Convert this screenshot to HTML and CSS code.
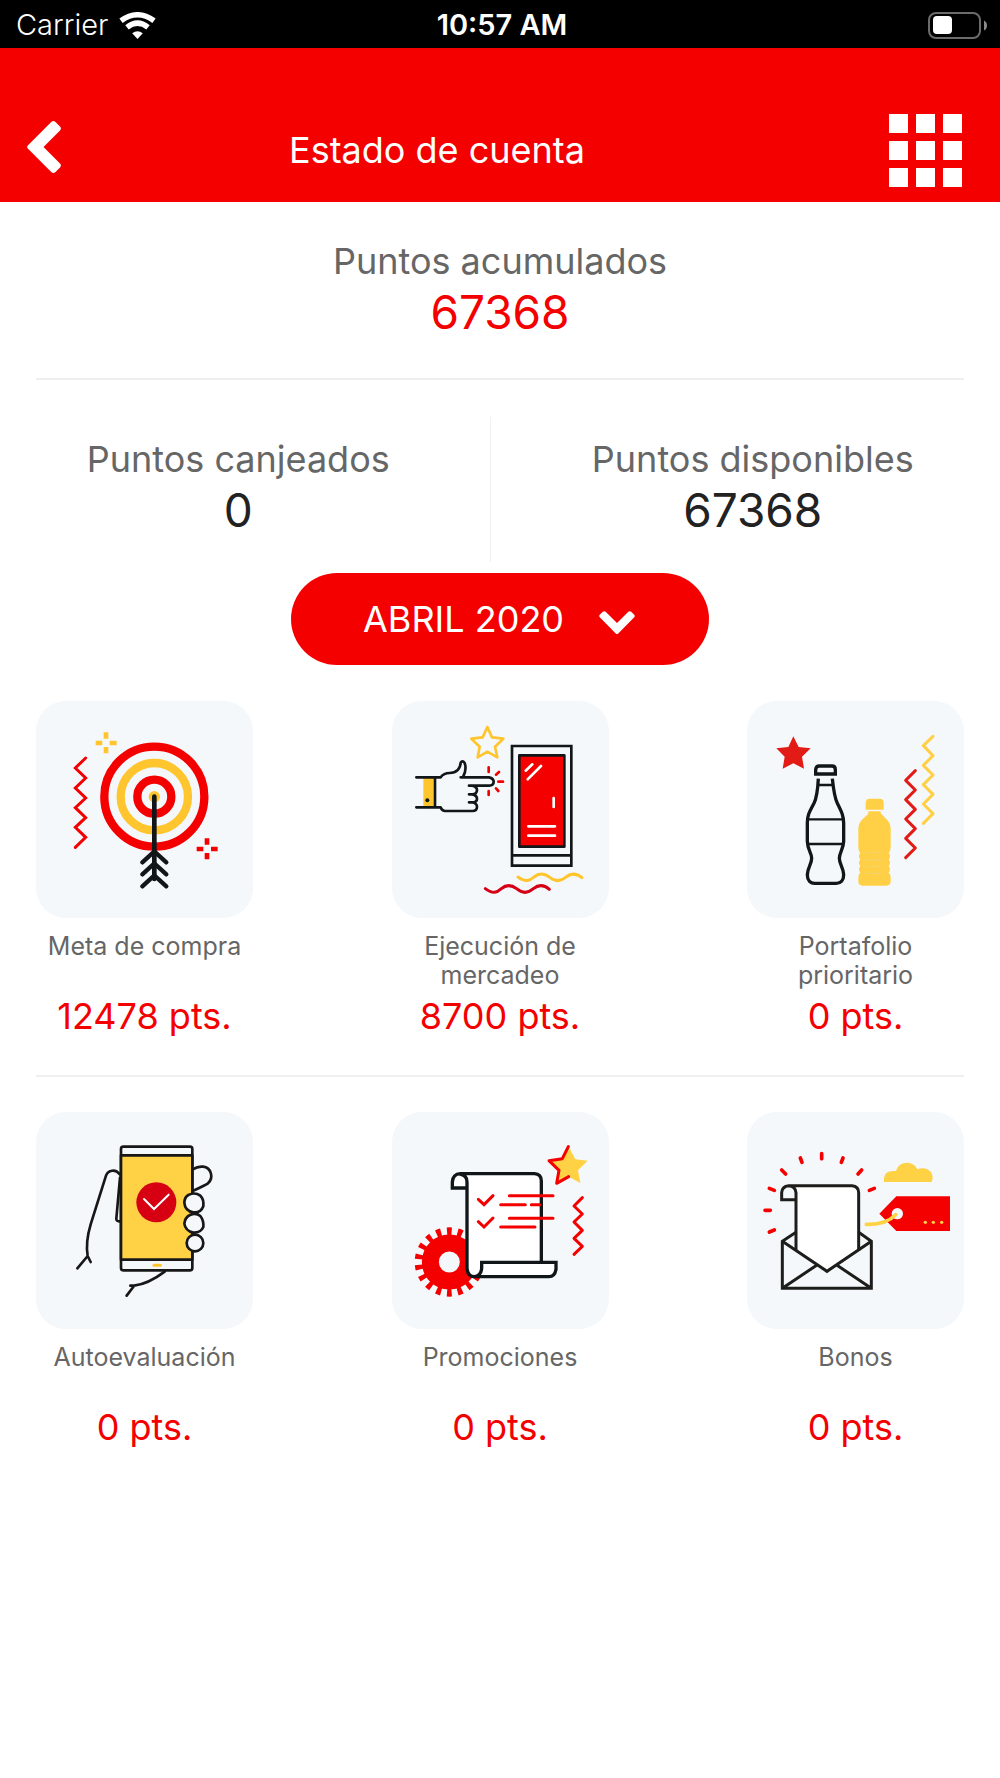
FILE: index.html
```html
<!DOCTYPE html>
<html lang="es">
<head>
<meta charset="utf-8">
<meta name="viewport" content="width=device-width, initial-scale=1">
<title>Estado de cuenta</title>
<link rel="stylesheet" href="styles.css">
</head>
<body>
<div class="status">
  <div class="status-left">
    <span>Carrier</span>
    <svg class="wifi" viewBox="0 0 37 27" aria-hidden="true">
      <path d="M18.500 27 L13.200 21.200 Q18.500 17.200 23.800 21.200Z" fill="#fff"/>
      <path d="M8 15.300 Q18.500 7 29 15.300" fill="none" stroke="#fff" stroke-width="5.500"/>
      <path d="M2 8.800 Q18.500 -3.200 35 8.800" fill="none" stroke="#fff" stroke-width="5.500"/>
    </svg>
  </div>
  <span class="status-time">10:57 AM</span>
  <div class="status-right">
    <svg class="battery" viewBox="0 0 60 27" aria-hidden="true">
      <rect x="1" y="1" width="51" height="25" rx="7" fill="none" stroke="#6b6b6b" stroke-width="2"/>
      <rect x="5" y="4" width="19" height="18" rx="4" fill="#fff"/>
      <path d="M56 8.500 Q59 10 59 13.500 Q59 17 56 18.500Z" fill="#8a8a8a"/>
    </svg>
  </div>
</div>

<header class="header">
  <button class="back" type="button" aria-label="Volver">
    <svg viewBox="0 0 34 52" aria-hidden="true"><path d="M24.500 .8 Q26.500 -.8 28.500 1 L33 5.500 Q34.800 7.600 33 9.500 L16.500 26 L33 42.500 Q34.800 44.400 33 46.500 L28.500 51 Q26.500 52.800 24.500 51.200 L.8 27.500 Q-.5 26 .8 24.500Z" fill="#fff"/></svg>
  </button>
  <h1 class="title">Estado de cuenta</h1>
  <button class="menu" type="button" aria-label="Menú">
    <svg viewBox="0 0 73 73" aria-hidden="true"><path d="M0 0h19v19H0zM27 0h19v19H27zM54 0h19v19H54zM0 27h19v19H0zM27 27h19v19H27zM54 27h19v19H54zM0 54h19v19H0zM27 54h19v19H27zM54 54h19v19H54z" fill="#fff"/></svg>
  </button>
</header>

<main class="main">
  <section class="total">
    <h2 class="stat-label">Puntos acumulados</h2>
    <p class="stat-value red">67368</p>
  </section>

  <section class="split">
    <div class="stat">
      <h2 class="stat-label">Puntos canjeados</h2>
      <p class="stat-value">0</p>
    </div>
    <div class="rule"></div>
    <div class="stat">
      <h2 class="stat-label">Puntos disponibles</h2>
      <p class="stat-value">67368</p>
    </div>
  </section>

  <div class="month">
    <select class="month-select" aria-label="Mes">
      <option>ABRIL 2020</option>
    </select>
    <svg class="month-arrow" viewBox="0 0 36 24" aria-hidden="true"><path d="M1 6.500 Q-.5 5 1 3.500 L3.800 .8 Q5.200 -.4 6.700 .8 L18 12 L29.300 .8 Q30.800 -.4 32.200 .8 L35 3.500 Q36.500 5 35 6.500 L19 22.800 Q18 23.600 17 22.800Z" fill="#fff"/></svg>
  </div>

  <section class="grid">
    <article class="card">
      <svg class="tile" viewBox="19 19 651 651" aria-hidden="true">
        <g fill="none">
          <circle cx="374" cy="306" r="150" stroke="#f40000" stroke-width="25"/>
          <circle cx="374" cy="306" r="101" stroke="#ffc52e" stroke-width="25"/>
          <circle cx="374" cy="306" r="51" stroke="#f40000" stroke-width="25"/>
          <circle cx="374" cy="306" r="17" fill="#ffc52e"/>
          <path d="M168 190 L137 220 L168 250 L137 280 L168 310 L137 339 L168 369 L137 398 L168 428 L137 458" stroke="#f40000" stroke-width="9" stroke-linecap="round"/>
          <path d="M374 306V553" stroke="#111719" stroke-width="14" stroke-linecap="round"/>
          <path d="M338 503L374 470L410 503M338 539L374 506L410 539M338 575L374 542L410 575" stroke="#111719" stroke-width="13" stroke-linecap="round"/>
          <path d="M229 113V132M229 157V176M198 145H218M240 145H261" stroke="#ffc52e" stroke-width="14"/>
          <path d="M532 431V450M532 475V494M501 463H521M544 463H564" stroke="#f40000" stroke-width="14"/>
        </g>
      </svg>
      <h3 class="name">Meta de compra</h3>
      <p class="points">12478 pts.</p>
    </article>

    <article class="card">
      <svg class="tile" viewBox="19 19 651 651" aria-hidden="true">
        <g fill="none" stroke-linecap="round" stroke-linejoin="round">
          <path d="M305 97L319 128L353 132L328 156L335 188L305 171L276 188L282 156L257 132L291 128Z" stroke="#ffc52e" stroke-width="8"/>
          <path d="M113 250H144V337H113Z" fill="#ffc52e"/>
          <circle cx="125" cy="317" r="6" fill="#111719"/>
          <g stroke="#111719" stroke-width="8">
            <path d="M92 248H165Q174 235 192 235C213 235 224 222 225 204Q230 196 237 205Q244 225 232 247M148 248V338M225 248H310Q324 251 324 261Q324 272 310 273H250M260 273Q274 276 274 286Q274 298 260 299H250M260 299Q274 302 274 312Q274 323 260 323H250M260 323Q274 327 274 336Q274 349 260 349H177Q168 347 165 338H92"/>
            <path d="M379 154H557V513H379ZM379 482H557" stroke-linejoin="miter"/>
            <path d="M401 182H536V456H401Z" fill="#f40000"/>
          </g>
          <path d="M309 218V232M340 232L331 240M338 261H352M331 281L338 289M309 289V301" stroke="#f40000" stroke-width="8"/>
          <path d="M420 228L440 209M426 254L466 214M504 310V337M428 395H508M428 423H508" stroke="#fff" stroke-width="8"/>
          <path d="M397 547C420 564 433 558 445 547C459 535 475 535 491 547C508 562 524 562 541 547C556 535 573 536 589 549" stroke="#ffc52e" stroke-width="9"/>
          <path d="M299 582C322 599 334 594 347 582C361 570 377 570 393 582C410 597 426 597 443 582C458 570 475 570 491 584" stroke="#d60016" stroke-width="9"/>
        </g>
      </svg>
      <h3 class="name">Ejecución de mercadeo</h3>
      <p class="points">8700 pts.</p>
    </article>

    <article class="card">
      <svg class="tile" viewBox="19 19 651 651" aria-hidden="true">
        <path d="M158 125L174 157L210 161L184 186L190 222L158 206L126 222L132 186L107 161L143 157Z" fill="#e31b17"/>
        <g fill="none" stroke="#111719">
          <path d="M225 238V225Q226 214 236 214H274Q284 214 284 225V238Z" stroke-width="10"/>
          <path d="M233 252C231 290 229 308 220 326C205 354 200 362 200 385V440C201 468 213 474 213 491C213 508 201 518 200 540C200 558 210 566 222 566H287C300 566 309 557 309 540C308 518 296 508 296 491C297 472 308 464 309 440V385C308 362 304 354 290 326C281 308 279 290 275 252" stroke-width="10"/>
          <path d="M234 271H275M202 374H307M202 448H307" stroke-width="7"/>
        </g>
        <path d="M375 345V325Q375 312 387 312H417Q429 312 429 325V345ZM383 350H420V356L442 378Q450 388 450 400V458Q450 470 444 474Q452 485 444 494Q452 505 444 514Q452 525 444 534Q450 538 450 548V560Q450 573 437 573H366Q353 573 353 560V548Q353 538 359 534Q351 525 359 514Q351 505 359 494Q351 485 359 474Q353 470 353 458V400Q353 388 361 378L383 357Z" fill="#ffcf45"/>
        <path d="M375 474H425M375 496H425M375 515H425M375 536H425" stroke="#f8d266" stroke-width="4"/>
        <g fill="none" stroke-width="9" stroke-linecap="round" stroke-linejoin="round">
          <path d="M577 125L548 153L577 183L548 212L577 241L548 270L577 299L548 328L577 357L548 386" stroke="#ffcf45"/>
          <path d="M524 228L495 257L524 286L495 315L524 344L495 373L524 402L495 431L524 460L495 489" stroke="#e31b17"/>
        </g>
      </svg>
      <h3 class="name">Portafolio prioritario</h3>
      <p class="points">0 pts.</p>
    </article>

    <hr class="divider">

    <article class="card">
      <svg class="tile" viewBox="19 18 651 651" aria-hidden="true">
        <g fill="none" stroke="#171717" stroke-width="8" stroke-linecap="round" stroke-linejoin="round">
          <path d="M270 205C258 188 235 192 229 209L183 355Q167 408 174 450L183 468M174 450L143 487M271 215L260 338Q260 347 270 346"/>
          <path d="M405 497Q356 534 313 539L302 539M313 540L291 569"/>
          <path d="M489 190Q505 180 520 182C545 185 553 215 535 232Q526 238 489 255"/>
          <rect x="274" y="122" width="214" height="371" rx="7" fill="#f5f8fb"/>
          <path d="M274 148H488V461H274Z" fill="#ffd145"/>
          <path d="M476 267Q496 257 512 269Q523 279 521 301Q513 322 491 319Q466 316 464 290Q465 273 476 267ZM481 327Q499 319 512 330Q523 344 521 363Q513 381 491 380Q467 375 464 353Q466 334 481 327Z" fill="#f5f8fb"/>
          <circle cx="496" cy="411" r="25" fill="#f5f8fb"/>
        </g>
        <circle cx="380" cy="289" r="60" fill="#d60012"/>
        <path d="M343 279L373 309L417 266" fill="none" stroke="#fff" stroke-width="6" stroke-linecap="round"/>
        <path d="M373 478H392" stroke="#ffc52e" stroke-width="9" stroke-linecap="round"/>
      </svg>
      <h3 class="name">Autoevaluación</h3>
      <p class="points">0 pts.</p>
    </article>

    <article class="card">
      <svg class="tile" viewBox="19 18 651 651" aria-hidden="true">
        <circle cx="191" cy="468" r="57" fill="none" stroke="#f40000" stroke-width="51"/>
        <circle cx="191" cy="468" r="92" fill="none" stroke="#f40000" stroke-width="24" pathLength="180" stroke-dasharray="4.400 5.600" stroke-dashoffset="-2.800"/>
        <path d="M200 245V228Q202 204 224 203H448Q467 205 467 222V469H511V489Q508 512 490 512H264Q244 508 244 488V245Z" fill="#fff"/>
        <g fill="none" stroke="#111719" stroke-width="10">
          <path d="M244 246H200V228Q202 204 224 203H446Q467 204 467 225V469"/>
          <path d="M222 204Q244 207 244 228V486Q246 512 266 512Q287 509 288 486V469H511V489Q508 512 490 512H266"/>
        </g>
        <path d="M549 122L569 160L606 164L577 193L584 231L549 212L513 232L520 193L490 164L530 158Z" fill="#ffd145"/>
        <g fill="none" stroke="#f40000" stroke-width="9" stroke-linecap="round" stroke-linejoin="round">
          <path d="M548 122L530 158L490 164L520 193L513 232L549 212"/>
          <path d="M590 275L565 300L590 324L565 348L590 373L565 397L590 421L565 445"/>
          <path d="M278 280L295 296L322 269M278 347L295 363L322 336" stroke-linejoin="miter"/>
          <path d="M371 269H502M345 296H419M437 296H462M371 337H502M345 363H448"/>
        </g>
      </svg>
      <h3 class="name">Promociones</h3>
      <p class="points">0 pts.</p>
    </article>

    <article class="card">
      <svg class="tile" viewBox="19 18 651 651" aria-hidden="true">
        <path d="M166 239H334Q354 241 354 258V434L259 496L166 434Z" fill="#fff"/>
        <g fill="none" stroke="#1d1d1b" stroke-width="9">
          <path d="M166 434V260Q164 240 144 239Q124 241 123 260V281H166M142 239H334Q354 241 354 260V434"/>
          <path d="M166 379L125 406V547H392V406L354 379M125 406L259 496L392 406M125 547L229 477M392 547L288 477"/>
        </g>
        <path d="M243 143V158M179 156L184 169M307 156L302 169M123 192L135 204M363 192L352 204M86 247L101 253M401 247L386 253M73 313H89M86 378L101 372" stroke="#f40000" stroke-width="11" stroke-linecap="round"/>
        <path d="M430 228Q427 195 457 195H466C474 163 519 162 530 190C555 180 577 194 576 217L573 228Z" fill="#ffd145"/>
        <path d="M467 271H628V375H467L416 323Z" fill="#f40000"/>
        <circle cx="470" cy="323" r="17" fill="#f5f8fb"/>
        <path d="M377 355Q435 357 465 326" fill="none" stroke="#ffd145" stroke-width="11" stroke-linecap="round"/>
        <g fill="#ffd145"><circle cx="554" cy="349" r="5"/><circle cx="578" cy="349" r="5"/><circle cx="603" cy="349" r="5"/></g>
      </svg>
      <h3 class="name">Bonos</h3>
      <p class="points">0 pts.</p>
    </article>
  </section>
</main>
</body>
</html>
```
FILE: styles.css
```css
* { box-sizing: border-box; }

body {
  margin: 0;
  background: #fff;
  color: #222;
  font-family: Inter, "Liberation Sans", sans-serif;
}

h1, h2, h3, p { margin: 0; font-weight: 400; }

button {
  padding: 0;
  border: 0;
  background: none;
  cursor: pointer;
}

svg { display: block; }

/* Device status bar */
.status {
  display: grid;
  grid-template-columns: 1fr auto 1fr;
  align-items: center;
  height: 48px;
  padding: 2px 12px 0 16px;
  background: #000;
  color: #fff;
  font-size: 29px;
  line-height: 32px;
}

.status-left { display: flex; align-items: center; gap: 11px; font-weight: 300; }
.status-time { font-weight: 600; }
.status-right { display: flex; justify-content: flex-end; }
.wifi { width: 37px; height: 27px; }
.battery { width: 60px; height: 27px; }

/* Red header */
.header {
  display: flex;
  align-items: center;
  padding: 62px 38px 12px 27px;
  background: #f50000;
  color: #fff;
}

.back { width: 58px; height: 80px; padding-bottom: 6px; }
.back svg { width: 34px; height: 52px; }

.title {
  flex: 1;
  margin-right: 100px;
  font-size: 36px;
  line-height: 44px;
  text-align: center;
}

.menu svg { width: 73px; height: 73px; }

/* Balance figures */
.main { padding: 0 36px 40px; }

.total {
  padding: 35px 0 39px;
  border-bottom: 2px solid #eeefef;
  text-align: center;
}

.stat-label {
  color: #666;
  font-size: 36px;
  line-height: 48px;
}

.stat-value {
  font-size: 46px;
  line-height: 54px;
}

.red { color: #f40000; }

.split {
  display: grid;
  grid-template-columns: 404fr 1px 422fr;
  column-gap: 50px;
  padding-top: 37px;
  text-align: center;
}

.stat { padding: 18px 0 25px; }
.rule { background: #f0f1f1; }

/* Month picker */
.month {
  position: relative;
  width: 418px;
  max-width: 100%;
  margin: 11px auto 36px;
}

.month-select {
  appearance: none;
  display: block;
  width: 100%;
  height: 92px;
  padding: 0 72px;
  border: 0;
  border-radius: 46px;
  background: #f50000;
  color: #fff;
  font: 400 36px/44px Inter, "Liberation Sans", sans-serif;
}

.month-arrow {
  position: absolute;
  top: 38px;
  right: 74px;
  width: 36px;
  height: 24px;
  pointer-events: none;
}

/* Categories */
.grid {
  display: grid;
  grid-template-columns: repeat(3, minmax(0, 217px));
  justify-content: space-between;
  row-gap: 35px;
}

.card { text-align: center; }

.tile {
  width: 100%;
  border-radius: 30px;
  background: #f4f8fb;
}

.name {
  min-height: 60px;
  margin-top: 14px;
  color: #666;
  font-size: 25px;
  line-height: 29px;
}

.points {
  color: #f40000;
  font-size: 36px;
  line-height: 48px;
}

.divider {
  grid-column: 1 / -1;
  width: 100%;
  height: 2px;
  margin: 0;
  border: 0;
  background: #eeefef;
}
```
